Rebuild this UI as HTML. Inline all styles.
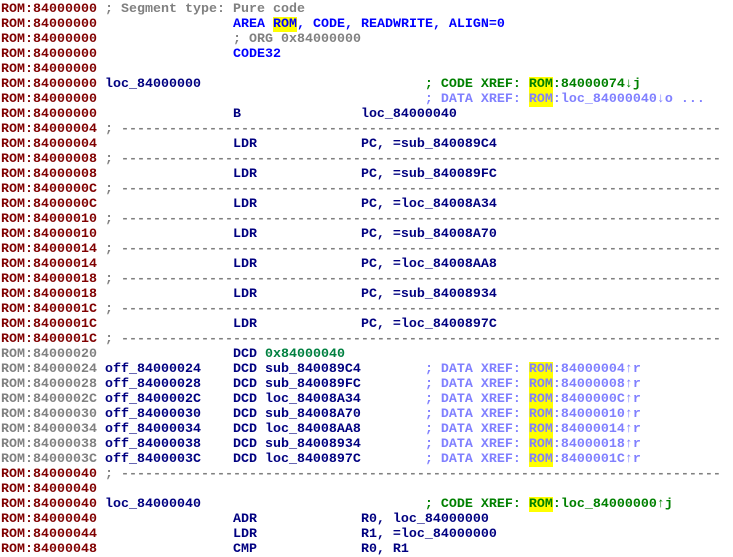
<!DOCTYPE html><html><head><style>
body{margin:0;background:#fff;width:733px;height:557px;overflow:hidden}
#c{font-family:"Liberation Mono",monospace;font-weight:bold;font-size:13.333px;line-height:15px;white-space:pre;padding-top:2px;padding-left:1px}
.a{color:#800000}.g{color:#808080}.b{color:#0000ff}.n{color:#000080}.gr{color:#008000}.lb{color:#8080ff}.dg{color:#008040}
.h{background:#ffff00}
</style></head><body><div id="c"><span class="a">ROM:84000000</span> <span class="g">; Segment type: Pure code</span>
<span class="a">ROM:84000000</span>                 <span class="b">AREA <span class="h">ROM</span>, CODE, READWRITE, ALIGN=0</span>
<span class="a">ROM:84000000</span>                 <span class="g">; ORG 0x84000000</span>
<span class="a">ROM:84000000</span>                 <span class="b">CODE32</span>
<span class="a">ROM:84000000</span>
<span class="a">ROM:84000000</span> <span class="n">loc_84000000</span>                            <span class="gr">; CODE XREF: <span class="h">ROM</span>:84000074↓j</span>
<span class="a">ROM:84000000</span>                                         <span class="lb">; DATA XREF: <span class="h">ROM</span>:loc_84000040↓o ...</span>
<span class="a">ROM:84000000</span>                 <span class="n">B               loc_84000040</span>
<span class="a">ROM:84000004</span> <span class="g">; ---------------------------------------------------------------------------</span>
<span class="a">ROM:84000004</span>                 <span class="n">LDR             PC, =sub_840089C4</span>
<span class="a">ROM:84000008</span> <span class="g">; ---------------------------------------------------------------------------</span>
<span class="a">ROM:84000008</span>                 <span class="n">LDR             PC, =sub_840089FC</span>
<span class="a">ROM:8400000C</span> <span class="g">; ---------------------------------------------------------------------------</span>
<span class="a">ROM:8400000C</span>                 <span class="n">LDR             PC, =loc_84008A34</span>
<span class="a">ROM:84000010</span> <span class="g">; ---------------------------------------------------------------------------</span>
<span class="a">ROM:84000010</span>                 <span class="n">LDR             PC, =sub_84008A70</span>
<span class="a">ROM:84000014</span> <span class="g">; ---------------------------------------------------------------------------</span>
<span class="a">ROM:84000014</span>                 <span class="n">LDR             PC, =loc_84008AA8</span>
<span class="a">ROM:84000018</span> <span class="g">; ---------------------------------------------------------------------------</span>
<span class="a">ROM:84000018</span>                 <span class="n">LDR             PC, =sub_84008934</span>
<span class="a">ROM:8400001C</span> <span class="g">; ---------------------------------------------------------------------------</span>
<span class="a">ROM:8400001C</span>                 <span class="n">LDR             PC, =loc_8400897C</span>
<span class="a">ROM:8400001C</span> <span class="g">; ---------------------------------------------------------------------------</span>
<span class="g">ROM:84000020</span>                 <span class="n">DCD</span> <span class="dg">0x84000040</span>
<span class="g">ROM:84000024</span> <span class="n">off_84000024    DCD sub_840089C4</span>        <span class="lb">; DATA XREF: <span class="h">ROM</span>:84000004↑r</span>
<span class="g">ROM:84000028</span> <span class="n">off_84000028    DCD sub_840089FC</span>        <span class="lb">; DATA XREF: <span class="h">ROM</span>:84000008↑r</span>
<span class="g">ROM:8400002C</span> <span class="n">off_8400002C    DCD loc_84008A34</span>        <span class="lb">; DATA XREF: <span class="h">ROM</span>:8400000C↑r</span>
<span class="g">ROM:84000030</span> <span class="n">off_84000030    DCD sub_84008A70</span>        <span class="lb">; DATA XREF: <span class="h">ROM</span>:84000010↑r</span>
<span class="g">ROM:84000034</span> <span class="n">off_84000034    DCD loc_84008AA8</span>        <span class="lb">; DATA XREF: <span class="h">ROM</span>:84000014↑r</span>
<span class="g">ROM:84000038</span> <span class="n">off_84000038    DCD sub_84008934</span>        <span class="lb">; DATA XREF: <span class="h">ROM</span>:84000018↑r</span>
<span class="g">ROM:8400003C</span> <span class="n">off_8400003C    DCD loc_8400897C</span>        <span class="lb">; DATA XREF: <span class="h">ROM</span>:8400001C↑r</span>
<span class="a">ROM:84000040</span> <span class="g">; ---------------------------------------------------------------------------</span>
<span class="a">ROM:84000040</span>
<span class="a">ROM:84000040</span> <span class="n">loc_84000040</span>                            <span class="gr">; CODE XREF: <span class="h">ROM</span>:loc_84000000↑j</span>
<span class="a">ROM:84000040</span>                 <span class="n">ADR             R0, loc_84000000</span>
<span class="a">ROM:84000044</span>                 <span class="n">LDR             R1, =loc_84000000</span>
<span class="a">ROM:84000048</span>                 <span class="n">CMP             R0, R1</span>
</div></body></html>
